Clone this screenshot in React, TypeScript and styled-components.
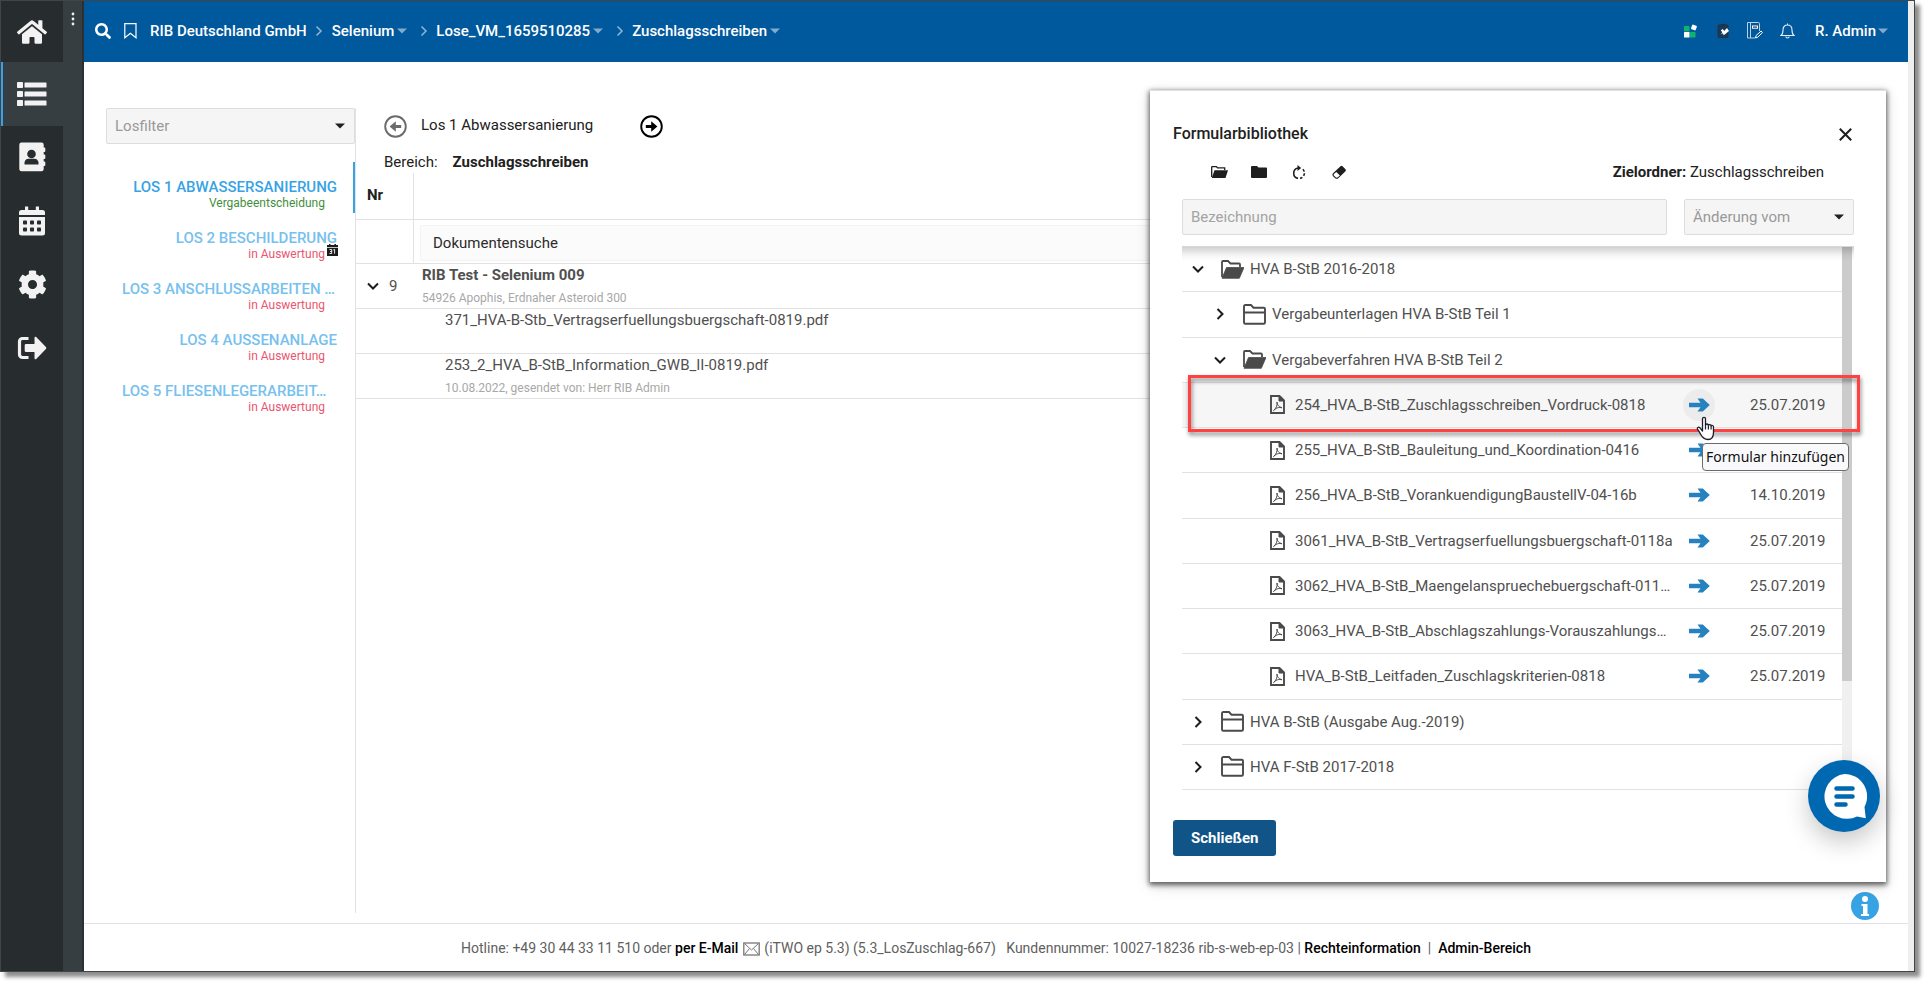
import React from "react";
import styled, { createGlobalStyle, css } from "styled-components";
import { FaSearch, FaHome, FaCog } from "react-icons/fa";

const GlobalStyle = createGlobalStyle`
  *, *::before, *::after { box-sizing: border-box; }
  body {
    margin: 0;
    background: #fff;
    color: #212121;
    font-family: Roboto, "Liberation Sans", sans-serif;
    font-size: 15px;
    line-height: 20px;
  }
  button, input, select { font: inherit; color: inherit; }
  button { border: 0; padding: 0; background: none; cursor: pointer; }
  a { color: inherit; text-decoration: none; }
  svg { display: block; flex: none; }
`;

/* ---------- page frame ---------- */

const Page = styled.div`
  min-height: 100vh;
  padding: 0 15px 15px 0;
  display: flex;
`;

const Frame = styled.div`
  position: relative;
  flex: 1;
  min-width: 0;
  display: flex;
  border: 1px solid #444;
  background: #fff;
  box-shadow: 5px 5px 4px rgba(0, 0, 0, 0.45);
`;

const PageScroll = styled.div`
  width: 6px;
  background: #eee;
`;

/* ---------- side navigation ---------- */

const SideNav = styled.nav`
  width: 62px;
  background: #272c2e;
`;

const NavHome = styled.a`
  height: 61px;
  display: flex;
  align-items: center;
  justify-content: center;
  color: #f2f2f2;
`;

const NavList = styled.div`
  height: 318px;
  display: flex;
  flex-direction: column;
`;

const NavItem = styled.a<{ $active?: boolean }>`
  flex: 1;
  display: flex;
  align-items: center;
  justify-content: center;
  color: #f2f2f2;
  ${(p) => p.$active && css`
    background: #363e42;
    box-shadow: inset 2px 0 #38a3e4;
  `}
`;

const NavStrip = styled.div`
  width: 21px;
  padding-top: 11px;
  background: #363e42;
  border-right: 2px solid #2b3033;
  display: flex;
  align-items: flex-start;
  justify-content: center;
`;

/* ---------- header ---------- */

const Column = styled.div`
  flex: 1;
  min-width: 0;
  display: flex;
  flex-direction: column;
`;

const Header = styled.header`
  height: 61px;
  padding: 0 20px 2px 11px;
  background: #00589d;
  color: #fff;
  font-weight: 500;
  display: flex;
  align-items: center;
  justify-content: space-between;
`;

const Crumbs = styled.div`
  display: flex;
  align-items: center;
`;

const HeaderButton = styled.button`
  margin-right: 13px;
`;

const Crumb = styled.a<{ $menu?: boolean }>`
  display: flex;
  align-items: center;
  gap: 3px;
  margin-right: ${(p) => (p.$menu ? 4 : 0)}px;
`;

const CrumbSep = styled.span`
  width: 25px;
  display: flex;
  justify-content: center;
`;

const Tools = styled.div`
  display: flex;
  align-items: center;
  gap: 16px;
`;

const ToolButton = styled.button`
  width: 16px;
  height: 18px;
  display: flex;
  align-items: center;
  justify-content: center;
`;

const UserButton = styled.button`
  margin-left: 4px;
  display: flex;
  align-items: center;
  gap: 2px;
  font-weight: 500;
`;

/* ---------- form controls ---------- */

const SelectBox = styled.label<{ $width?: number }>`
  position: relative;
  display: block;
  width: ${(p) => (p.$width ? `${p.$width}px` : "100%")};
  svg { position: absolute; right: 10px; top: 15px; pointer-events: none; }
`;

const Select = styled.select`
  appearance: none;
  width: 100%;
  height: 36px;
  padding: 0 30px 0 8px;
  border: 1px solid #ddd;
  border-radius: 2px;
  background: #f5f5f5;
  color: #999;
`;

const TextInput = styled.input`
  flex: 1;
  min-width: 0;
  height: 36px;
  padding: 0 8px;
  border: 1px solid #ddd;
  border-radius: 2px;
  background: #f5f5f5;
  &::placeholder { color: #a3a3a3; opacity: 1; }
`;

/* ---------- lot panel ---------- */

const Body = styled.div`
  flex: 1;
  min-height: 0;
  padding: 46px 40px 10px 22px;
  display: flex;
`;

const LotPanel = styled.aside`
  width: 250px;
  border-right: 1px solid #e2e2e2;
`;

const Lots = styled.ul`
  list-style: none;
  margin: 18px 0 0;
  padding: 0;
`;

const Lot = styled.li<{ $active?: boolean }>`
  position: relative;
  height: 51px;
  padding: 17px 16px 0 16px;
  line-height: 16px;
  text-align: right;
  border-right: 2px solid ${(p) => (p.$active ? "#38a3e4" : "transparent")};
  > svg { position: absolute; right: 15px; top: 31px; }
`;

const LotTitle = styled.a<{ $active?: boolean; $short?: boolean }>`
  display: block;
  white-space: nowrap;
  text-align: ${(p) => (p.$short ? "left" : "right")};
  font-weight: 500;
  color: ${(p) => (p.$active ? "#38a3e4" : "#77c1ee")};
`;

const LotState = styled.div<{ $done?: boolean }>`
  padding-right: 12px;
  font-size: 12px;
  color: ${(p) => (p.$done ? "#3f8f3a" : "#ea5670")};
`;

/* ---------- documents ---------- */

const Main = styled.main`
  flex: 1;
  min-width: 0;
`;

const LotPager = styled.div`
  height: 36px;
  padding-left: 28px;
  display: flex;
  align-items: center;
`;

const LotName = styled.span`
  width: 233px;
  padding: 0 0 2px 14px;
`;

const Area = styled.div`
  margin: 8px 0 1px;
  padding-left: 28px;
  display: flex;
  gap: 15px;
`;

const DocTable = styled.table`
  width: 100%;
  border-collapse: separate;
  border-spacing: 0;
  table-layout: fixed;
`;

const NrCol = styled.col`
  width: 58px;
`;

const HeadCell = styled.th<{ $ruled?: boolean }>`
  height: 47px;
  padding: 0 0 2px 11px;
  text-align: left;
  font-weight: 700;
  border-bottom: 1px solid #e2e2e2;
  ${(p) => p.$ruled && css`border-right: 1px solid #e2e2e2;`}
`;

const SearchCell = styled.td<{ $ruled?: boolean }>`
  height: 44px;
  padding: 3px 0 0 6px;
  border-bottom: 1px solid #e2e2e2;
  ${(p) => p.$ruled && css`border-right: 1px solid #e2e2e2;`}
`;

const SearchInput = styled.input`
  display: block;
  width: 100%;
  height: 36px;
  padding: 0 12px;
  border: 1px solid #f3f3f3;
  border-radius: 2px;
  background: #fbfbfb;
  &::placeholder { color: #2b2b2b; opacity: 1; }
`;

const DocCell = styled.td<{ $indent?: number }>`
  height: 45px;
  padding: 1px 0 0 ${(p) => p.$indent ?? 8}px;
  vertical-align: top;
  color: #505050;
  border-bottom: 1px solid #e2e2e2;
`;

const NrToggle = styled.button`
  height: 42px;
  padding-left: 3px;
  display: flex;
  align-items: center;
  gap: 10px;
`;

const Note = styled.div`
  padding-top: 3px;
  font-size: 12px;
  color: #a8a8a8;
`;

/* ---------- footer ---------- */

const Footer = styled.footer`
  height: 48px;
  padding-top: 14px;
  border-top: 1px solid #e2e2e2;
  color: #606060;
  font-size: 14px;
  text-align: center;
  white-space: pre;
  svg { display: inline-block; margin: 0 1px; vertical-align: -3px; }
  a { color: #000; font-weight: 500; }
`;

const InfoButton = styled.button`
  position: absolute;
  right: 35px;
  bottom: 51px;
  width: 28px;
  height: 28px;
`;

/* ---------- form library dialog ---------- */

const Dialog = styled.section`
  position: absolute;
  top: 89px;
  right: 28px;
  width: 736px;
  padding: 33px 32px 26px 23px;
  background: #fff;
  border-top: 1px solid #e0e0e0;
  box-shadow: 0 2px 5px 1px rgba(0, 0, 0, 0.6), 0 4px 14px rgba(0, 0, 0, 0.15);
`;

const DialogHead = styled.div`
  display: flex;
  align-items: center;
  justify-content: space-between;
`;

const DialogTitle = styled.h2`
  margin: 0;
  font-size: 16px;
  line-height: 20px;
  font-weight: 500;
`;

const CloseButton = styled.button`
  width: 18px;
  height: 18px;
  display: flex;
  align-items: center;
  justify-content: center;
`;

const DialogTools = styled.div`
  margin-top: 18px;
  padding: 0 30px 0 26px;
  display: flex;
  align-items: center;
`;

const IconButton = styled.button`
  width: 40px;
  height: 20px;
  display: flex;
  align-items: center;
  justify-content: center;
`;

const Target = styled.span`
  margin-left: auto;
`;

const Filters = styled.div`
  margin: 17px 0 0 9px;
  display: flex;
  gap: 17px;
`;

const TreeArea = styled.div`
  position: relative;
  margin: 11px 0 0 9px;
  padding-right: 2px;
  display: flex;
  border-top: 1px solid #d8d8d8;
  &::before {
    content: "";
    position: absolute;
    inset: 0 0 auto 0;
    height: 14px;
    background: linear-gradient(rgba(0, 0, 0, 0.18), rgba(0, 0, 0, 0.04) 60%, rgba(0, 0, 0, 0));
    pointer-events: none;
  }
`;

const TreeView = styled.div`
  flex: 1;
  min-width: 0;
`;

const Tree = styled.table`
  width: 100%;
  height: 543px;
  border-collapse: separate;
  border-spacing: 0;
  table-layout: fixed;
  color: #505050;
`;

const TreeCol = styled.col<{ $width?: number }>`
  width: ${(p) => (p.$width ? `${p.$width}px` : "auto")};
`;

const TreeRow = styled.tr<{ $hover?: boolean }>`
  height: 45px;
  background: ${(p) => (p.$hover ? "#f6f6f6" : "transparent")};
`;

const TreeCell = styled.td`
  padding: 0;
  border-bottom: 1px solid #e2e2e2;
`;

const DateCell = styled(TreeCell)`
  padding-left: 26px;
`;

const Node = styled.div<{ $level: number }>`
  display: flex;
  align-items: center;
  padding-left: ${(p) => [9, 31, 88][p.$level]}px;
`;

const Toggle = styled.button`
  flex: none;
  width: 14px;
  height: 20px;
  margin-right: 16px;
  display: flex;
  align-items: center;
  justify-content: center;
`;

const NodeLabel = styled.span<{ $gap: number }>`
  min-width: 0;
  margin-left: ${(p) => p.$gap}px;
  overflow: hidden;
  white-space: nowrap;
  text-overflow: ellipsis;
`;

const AddButton = styled.button<{ $hover?: boolean }>`
  width: 32px;
  height: 32px;
  margin: 0 auto;
  border-radius: 50%;
  display: flex;
  align-items: center;
  justify-content: center;
  background: ${(p) => (p.$hover ? "#ececec" : "transparent")};
`;

const ScrollTrack = styled.div`
  width: 10px;
  background: #f0f0f0;
`;

const ScrollThumb = styled.div`
  height: 80%;
  background: #cbcbcb;
`;

const Highlight = styled.div`
  position: absolute;
  left: 6px;
  right: -6px;
  top: 128px;
  height: 57px;
  border: 3px solid #ff4141;
  filter: drop-shadow(1px 3px 2px rgba(0, 0, 0, 0.5));
  pointer-events: none;
`;

const Pointer = styled.svg`
  position: absolute;
  right: 139px;
  top: 169px;
`;

const Tooltip = styled.div`
  position: absolute;
  right: 5px;
  top: 196px;
  padding: 3px;
  border: 1px solid #6b6b6b;
  border-radius: 4px;
  background: #f9f9fb;
  color: #111;
  font-family: "Noto Sans", "Open Sans", sans-serif;
  font-size: 14px;
  line-height: 20px;
  white-space: nowrap;
`;

const PrimaryButton = styled.button`
  height: 36px;
  margin-top: 30px;
  padding: 0 18px;
  border-radius: 3px;
  background: #115488;
  color: #fff;
  font-weight: 700;
`;

const ChatButton = styled.button`
  position: absolute;
  right: 6px;
  bottom: 50px;
  width: 72px;
  height: 72px;
  border-radius: 50%;
  background: #0067b1;
  box-shadow: 0 10px 24px rgba(0, 0, 0, 0.22);
`;

/* ---------- drawings ---------- */

const Caret = ({ color = "#212121" }: { color?: string }) => (
  <svg width="10" height="6" viewBox="0 0 10 6"><path d="M0 0.5h10L5 5.5z" fill={color} /></svg>
);

const Separator = () => (
  <svg width="8" height="12" viewBox="0 0 8 12" fill="none" stroke="#8fb6d6" strokeWidth="1.5"><path d="M1.500 1.500L6 6l-4.500 4.500" /></svg>
);

const BookmarkIcon = () => (
  <svg width="13" height="16" viewBox="0 0 13 16" fill="none" stroke="#fff" strokeWidth="1.200"><path d="M.8.6h11.200v14.200L6.400 10.200.8 14.800z" /></svg>
);

const DotsIcon = () => (
  <svg width="4" height="14" viewBox="0 0 4 14" fill="#f0f0f0"><circle cx="2" cy="2" r="1.400" /><circle cx="2" cy="7" r="1.400" /><circle cx="2" cy="12" r="1.400" /></svg>
);

const ListIcon = () => (
  <svg width="30" height="26" viewBox="0 0 30 26" fill="currentColor">
    {[1, 10, 19].map((y) => <g key={y}><rect x="0" y={y} width="6" height="6" rx=".8" /><rect x="7.500" y={y + 0.5} width="22" height="5" rx=".6" /></g>)}
  </svg>
);

const ContactsIcon = () => (
  <svg width="28" height="30" viewBox="0 0 28 30">
    <path d="M3.500 0.500h20a2.200 2.200 0 0 1 2.200 2.200V5.500h.8a.8.8 0 0 1 .8.8v3a.8.8 0 0 1-.8.8h-.8v2.400h.8a.8.8 0 0 1 .8.8v3a.8.8 0 0 1-.8.8h-.8v2.400h.8a.8.8 0 0 1 .8.8v3a.8.8 0 0 1-.8.8h-.8v3a2.200 2.200 0 0 1-2.200 2.200h-20a2.200 2.200 0 0 1-2.200-2.200V2.700A2.200 2.200 0 0 1 3.500.5z" fill="#f2f2f2" />
    <circle cx="13.500" cy="12" r="4.300" fill="#272c2e" />
    <path d="M6.500 22.500v-1.700c0-2.300 1.700-4 4-4h6c2.300 0 4 1.700 4 4v1.700z" fill="#272c2e" />
  </svg>
);

const CalendarIcon = () => (
  <svg width="28" height="30" viewBox="0 0 28 30">
    <path d="M7 .5h3.200V4h7.600V.5H21V4h3.500A2.500 2.500 0 0 1 27 6.500V9H1V6.500A2.500 2.500 0 0 1 3.500 4H7z" fill="#f2f2f2" />
    <path d="M1 11h26v16a2.500 2.500 0 0 1-2.500 2.500h-21A2.500 2.500 0 0 1 1 27z" fill="#f2f2f2" />
    {[14.5, 21.5].map((y) => [5, 12, 19].map((x) => <rect key={`${x}-${y}`} x={x} y={y} width="4" height="4" rx=".8" fill="#272c2e" />))}
  </svg>
);

const ExitIcon = () => (
  <svg width="30" height="24" viewBox="0 0 30 24">
    <path d="M11.500 2.500H5.500a3 3 0 0 0-3 3v13a3 3 0 0 0 3 3h6" fill="none" stroke="#f2f2f2" strokeWidth="3.200" />
    <path d="M9 8h8.500V1.800a1 1 0 0 1 1.700-.8l9.700 10a1.400 1.400 0 0 1 0 2l-9.700 10a1 1 0 0 1-1.700-.8V16H9a1.300 1.300 0 0 1-1.300-1.300V9.300A1.300 1.300 0 0 1 9 8z" fill="#f2f2f2" />
  </svg>
);

const AppsIcon = () => (
  <svg width="14" height="14" viewBox="0 0 14 14">
    <rect x="0" y="2" width="5.500" height="5.500" rx=".6" fill="#0fb36b" />
    <rect x="0" y="8" width="5.500" height="5.500" rx=".6" fill="#fff" />
    <rect x="6" y="8" width="5.500" height="5.500" rx=".6" fill="#0fb36b" />
    <rect x="7.500" y="1" width="5" height="5" rx="1" fill="#fff" transform="rotate(20 10 3.400)" />
  </svg>
);

const ClipboardIcon = () => (
  <svg width="13" height="15" viewBox="0 0 13 15">
    <rect x="1" y="2" width="10" height="12.500" rx="1" fill="#163a5c" stroke="#24323e" />
    <path d="M3.500 2.500C3.500 0 8.500 0 8.500 2.500z" fill="#24323e" />
    <path d="M3.800 7.200l2-1.200 1.400 2 2.800-3L12 8l-5.200 4.300-1-2L4 11.500l1.200-2.300z" fill="#fff" />
  </svg>
);

const NotebookIcon = () => (
  <svg width="16" height="17" viewBox="0 0 16 17" fill="none" stroke="#b8d2e6" strokeWidth="1">
    <path d="M12.500 9V1.500A1 1 0 0 0 11.500.5H.5v15.500H8M3.500.5V16" />
    <rect x="5.500" y="4" width="5" height="2.200" stroke="#fff" fill="#16324c" />
    <path d="M8.500 16l.6-2.500 5-4.500 1.300 1.500-4.600 4.700z" stroke="#fff" />
  </svg>
);

const BellIcon = () => (
  <svg width="15" height="16" viewBox="0 0 15 16" fill="none" stroke="#e6eff6" strokeWidth="1.100">
    <path d="M1 12.500c1.800-1.300 2-3 2-5.500C3 3.800 4.800 2 7.500 2S12 3.800 12 7c0 2.500.2 4.200 2 5.500zM7.500 2V.4M5.800 13.500c.2 2 3.200 2 3.400 0" />
  </svg>
);

const Day31Icon = () => (
  <svg width="11" height="12" viewBox="0 0 11 12">
    <path d="M2 0h1.500v1h4V0H9v1h2v2H0V1h2zM0 3.700h11V12H0z" fill="#1c1c1c" />
    <path d="M2.500 5.500h2.200v4H2.500M3 7.500h1.700M6.300 6l1.300-.6v4.300" fill="none" stroke="#fff" strokeWidth=".9" />
  </svg>
);

const CircleArrow = ({ color, flip }: { color: string; flip?: boolean }) => (
  <svg width="23" height="23" viewBox="0 0 23 23">
    <g transform={flip ? "matrix(-1 0 0 1 23 0)" : undefined}>
      <circle cx="11.500" cy="11.500" r="10.300" fill="none" stroke={color} strokeWidth="1.900" />
      <path d="M5.800 10h5.400V6.300l6.200 5.200-6.200 5.200V13H5.800z" fill={color} />
    </g>
  </svg>
);

const Chevron = ({ open }: { open?: boolean }) => (
  <svg width="12" height="12" viewBox="0 0 12 12" fill="none" stroke="#1c1c1c" strokeWidth="2">
    <path d={open ? "M1 3.500l5 5 5-5" : "M3.500 1l5 5-5 5"} />
  </svg>
);

const FolderOpenIcon = () => (
  <svg width="23" height="19" viewBox="0 0 23 19">
    <path d="M1 17V2a1 1 0 0 1 1-1h5l2.500 2.500H18a1 1 0 0 1 1 1V7" fill="none" stroke="#4a4a4a" strokeWidth="1.800" />
    <path d="M5.500 7.500H23L18.300 18.300H1z" fill="#4a4a4a" stroke="#4a4a4a" strokeLinejoin="round" strokeWidth=".8" />
  </svg>
);

const FolderIcon = () => (
  <svg width="23" height="21" viewBox="0 0 23 21" fill="none" stroke="#4a4a4a" strokeWidth="1.900">
    <path d="M1 18.500V2.300A1.300 1.300 0 0 1 2.300 1H8l2.500 2.700h10.200A1.300 1.300 0 0 1 22 5v13.500a1.300 1.300 0 0 1-1.300 1.300H2.300A1.300 1.300 0 0 1 1 18.500zM1 8.500h21" />
  </svg>
);

const PdfIcon = () => (
  <svg width="15" height="19" viewBox="0 0 15 19" fill="none" stroke="#4a4a4a">
    <path d="M1 1h8.500L14 5.500V18H1z" strokeWidth="1.900" />
    <path d="M9 1v5h5z" fill="#4a4a4a" />
    <path d="M7 7c.3 2.500.8 4.200 5 5.800-3-.8-5.500-.3-8.500 2.800C6 13.500 7.600 10.500 7 7z" strokeWidth="1" />
  </svg>
);

const AddArrow = () => (
  <svg width="21" height="14" viewBox="0 0 21 14"><path d="M0 4.800h11.500L8.500.5h5.300L20.800 7l-7 6.500H8.500l3-4.300H0z" fill="#2682bf" /></svg>
);

const SmallFolderOpen = () => (
  <svg width="17" height="12" viewBox="0 0 17 12">
    <path d="M.7 11V1.200A.6.6 0 0 1 1.300.6h4l1.200 1.200h7.200v2.200" fill="none" stroke="#1f1f1f" strokeWidth="1.300" />
    <path d="M3.500 4.200H17L14.500 12H.8z" fill="#1f1f1f" />
  </svg>
);

const SmallFolder = () => (
  <svg width="16" height="12" viewBox="0 0 16 12"><path d="M1 0h5l1.500 1.500H15a1 1 0 0 1 1 1V11a1 1 0 0 1-1 1H1a1 1 0 0 1-1-1V1a1 1 0 0 1 1-1z" fill="#1f1f1f" /></svg>
);

const ReloadIcon = () => (
  <svg width="14" height="15" viewBox="0 0 14 15" fill="none" stroke="#1f1f1f" strokeWidth="1.600">
    <path d="M6 13.400A5.300 5.300 0 0 1 6 3" />
    <path d="M8 13.300a5.300 5.300 0 0 0 4.200-6.800M12.200 6.500A5.300 5.300 0 0 0 10.500 4" strokeDasharray="2.600 1.700" />
    <path d="M5.500 0v6l3.700-3z" fill="#1f1f1f" stroke="none" />
  </svg>
);

const EraserIcon = () => (
  <svg width="16" height="15" viewBox="0 0 16 15">
    <path d="M9.500 1.200a1.500 1.500 0 0 1 2 0l3 3a1.500 1.500 0 0 1 0 2L7.500 13a2.500 2.500 0 0 1-3.500 0L2 11.200a2.200 2.200 0 0 1 0-3z" fill="#1f1f1f" />
    <path d="M5.300 7l3.600 3.500L6.700 12.200a1.500 1.500 0 0 1-2 0L2.900 10.500a1.200 1.200 0 0 1 0-1.500z" fill="#fff" />
  </svg>
);

const CloseIcon = () => (
  <svg width="13" height="13" viewBox="0 0 13 13" stroke="#1c1c1c" strokeWidth="2"><path d="M.8.8l11.400 11.400M12.200.8L.8 12.200" /></svg>
);

const MailIcon = () => (
  <svg width="17" height="14" viewBox="0 0 17 14" fill="none" stroke="#777" strokeWidth="1"><rect x=".8" y="1" width="15.400" height="12" strokeWidth="1.300" /><path d="M1.500 1.500L8.500 8l7-6.500M1.500 12.500l5-6M15.500 12.500l-5-6" /></svg>
);

const InfoIcon = () => (
  <svg width="28" height="28" viewBox="0 0 28 28">
    <circle cx="14" cy="14" r="14" fill="#38a3e4" />
    <circle cx="14" cy="7" r="3" fill="#fff" />
    <path d="M10.500 12h6v10H18v2h-8v-2h2v-8h-1.500z" fill="#fff" />
  </svg>
);

const ChatIcon = () => (
  <svg width="72" height="72" viewBox="0 0 72 72">
    <path d="M36.500 14a22.500 22.500 0 0 1 20 33l1.300 11.200-8.800-1.700A22.500 22.500 0 1 1 36.500 14z" fill="#fff" />
    <path d="M28.500 28.500h16M28.500 36.500h16M28.500 44.500h9" stroke="#0067b1" strokeWidth="4.500" strokeLinecap="round" />
  </svg>
);

/* ---------- data ---------- */

const crumbs = ["Selenium", "Lose_VM_1659510285", "Zuschlagsschreiben"];

const lots = [
  { title: "LOS 1 ABWASSERSANIERUNG", state: "Vergabeentscheidung", active: true },
  { title: "LOS 2 BESCHILDERUNG", state: "in Auswertung", dated: true },
  { title: "LOS 3 ANSCHLUSSARBEITEN …", state: "in Auswertung", short: true },
  { title: "LOS 4 AUSSENANLAGE", state: "in Auswertung" },
  { title: "LOS 5 FLIESENLEGERARBEIT…", state: "in Auswertung", short: true },
];

type TreeNode = { label: string; level: number; open?: boolean; date?: string; hover?: boolean };

const nodes: TreeNode[] = [
  { label: "HVA B-StB 2016-2018", level: 0, open: true },
  { label: "Vergabeunterlagen HVA B-StB Teil 1", level: 1 },
  { label: "Vergabeverfahren HVA B-StB Teil 2", level: 1, open: true },
  { label: "254_HVA_B-StB_Zuschlagsschreiben_Vordruck-0818", level: 2, date: "25.07.2019", hover: true },
  { label: "255_HVA_B-StB_Bauleitung_und_Koordination-0416", level: 2 },
  { label: "256_HVA_B-StB_VorankuendigungBaustellV-04-16b", level: 2, date: "14.10.2019" },
  { label: "3061_HVA_B-StB_Vertragserfuellungsbuergschaft-0118a", level: 2, date: "25.07.2019" },
  { label: "3062_HVA_B-StB_Maengelanspruechebuergschaft-011…", level: 2, date: "25.07.2019" },
  { label: "3063_HVA_B-StB_Abschlagszahlungs-Vorauszahlungs…", level: 2, date: "25.07.2019" },
  { label: "HVA_B-StB_Leitfaden_Zuschlagskriterien-0818", level: 2, date: "25.07.2019" },
  { label: "HVA B-StB (Ausgabe Aug.-2019)", level: 0 },
  { label: "HVA F-StB 2017-2018", level: 0 },
];

export default function App() {
  return (
    <Page>
      <GlobalStyle />
      <Frame>
        <SideNav>
          <NavHome href="#" aria-label="Start"><FaHome size={30} /></NavHome>
          <NavList>
            <NavItem href="#" $active aria-label="Vergaben"><ListIcon /></NavItem>
            <NavItem href="#" aria-label="Kontakte"><ContactsIcon /></NavItem>
            <NavItem href="#" aria-label="Kalender"><CalendarIcon /></NavItem>
            <NavItem href="#" aria-label="Einstellungen"><FaCog size={29} /></NavItem>
            <NavItem href="#" aria-label="Abmelden"><ExitIcon /></NavItem>
          </NavList>
        </SideNav>
        <NavStrip><DotsIcon /></NavStrip>

        <Column>
          <Header>
            <Crumbs>
              <HeaderButton aria-label="Suche"><FaSearch size={16} /></HeaderButton>
              <HeaderButton aria-label="Lesezeichen"><BookmarkIcon /></HeaderButton>
              <Crumb href="#">RIB Deutschland GmbH</Crumb>
              {crumbs.map((name) => (
                <React.Fragment key={name}>
                  <CrumbSep><Separator /></CrumbSep>
                  <Crumb href="#" $menu>{name}<Caret color="#7fabce" /></Crumb>
                </React.Fragment>
              ))}
            </Crumbs>
            <Tools>
              <ToolButton aria-label="Apps"><AppsIcon /></ToolButton>
              <ToolButton aria-label="Aufgaben"><ClipboardIcon /></ToolButton>
              <ToolButton aria-label="Notizen"><NotebookIcon /></ToolButton>
              <ToolButton aria-label="Benachrichtigungen"><BellIcon /></ToolButton>
              <UserButton>R. Admin<Caret color="#7fabce" /></UserButton>
            </Tools>
          </Header>

          <Body>
            <LotPanel>
              <SelectBox>
                <Select aria-label="Losfilter"><option>Losfilter</option></Select>
                <Caret />
              </SelectBox>
              <Lots>
                {lots.map((lot) => (
                  <Lot key={lot.title} $active={lot.active}>
                    <LotTitle href="#" $active={lot.active} $short={lot.short}>{lot.title}</LotTitle>
                    <LotState $done={lot.active}>{lot.state}</LotState>
                    {lot.dated && <Day31Icon />}
                  </Lot>
                ))}
              </Lots>
            </LotPanel>

            <Main>
              <LotPager>
                <button aria-label="Voriges Los"><CircleArrow color="#6b6b6b" flip /></button>
                <LotName>Los 1 Abwassersanierung</LotName>
                <button aria-label="Nächstes Los"><CircleArrow color="#000" /></button>
              </LotPager>
              <Area><span>Bereich:</span><b>Zuschlagsschreiben</b></Area>
              <DocTable>
                <colgroup><NrCol /><col /></colgroup>
                <thead>
                  <tr><HeadCell $ruled>Nr</HeadCell><HeadCell /></tr>
                </thead>
                <tbody>
                  <tr>
                    <SearchCell $ruled />
                    <SearchCell><SearchInput aria-label="Dokumentensuche" placeholder="Dokumentensuche" /></SearchCell>
                  </tr>
                  <tr>
                    <DocCell><NrToggle><Chevron open />9</NrToggle></DocCell>
                    <DocCell><b>RIB Test - Selenium 009</b><Note>54926 Apophis, Erdnaher Asteroid 300</Note></DocCell>
                  </tr>
                  <tr>
                    <DocCell />
                    <DocCell $indent={31}>371_HVA-B-Stb_Vertragserfuellungsbuergschaft-0819.pdf</DocCell>
                  </tr>
                  <tr>
                    <DocCell />
                    <DocCell $indent={31}>
                      253_2_HVA_B-StB_Information_GWB_II-0819.pdf
                      <Note>10.08.2022, gesendet von: Herr RIB Admin</Note>
                    </DocCell>
                  </tr>
                </tbody>
              </DocTable>
            </Main>
          </Body>

          <Footer>
            Hotline: +49 30 44 33 11 510 oder <a href="#">per E-Mail</a> <MailIcon /> (iTWO ep 5.3) (5.3_LosZuschlag-667){"   "}Kundennummer: 10027-18236 rib-s-web-ep-03 | <a href="#">Rechteinformation</a>{"  |  "}<a href="#">Admin-Bereich</a>
          </Footer>
        </Column>
        <PageScroll />

        <InfoButton aria-label="Information"><InfoIcon /></InfoButton>

        <Dialog role="dialog" aria-labelledby="library-title">
          <DialogHead>
            <DialogTitle id="library-title">Formularbibliothek</DialogTitle>
            <CloseButton aria-label="Dialog schließen"><CloseIcon /></CloseButton>
          </DialogHead>
          <DialogTools>
            <IconButton aria-label="Alle öffnen"><SmallFolderOpen /></IconButton>
            <IconButton aria-label="Alle schließen"><SmallFolder /></IconButton>
            <IconButton aria-label="Neu laden"><ReloadIcon /></IconButton>
            <IconButton aria-label="Filter löschen"><EraserIcon /></IconButton>
            <Target><b>Zielordner:</b> Zuschlagsschreiben</Target>
          </DialogTools>
          <Filters>
            <TextInput aria-label="Bezeichnung" placeholder="Bezeichnung" />
            <SelectBox $width={170}>
              <Select aria-label="Änderung vom"><option>Änderung vom</option></Select>
              <Caret />
            </SelectBox>
          </Filters>
          <TreeArea>
            <TreeView>
              <Tree>
                <colgroup><TreeCol /><TreeCol $width={50} /><TreeCol $width={118} /></colgroup>
                <tbody>
                  {nodes.map((n) => (
                    <TreeRow key={n.label} $hover={n.hover}>
                      <TreeCell>
                        <Node $level={n.level}>
                          {n.level < 2 && (
                            <Toggle aria-label={n.open ? "Zuklappen" : "Aufklappen"}><Chevron open={n.open} /></Toggle>
                          )}
                          {n.level === 2 ? <PdfIcon /> : n.open ? <FolderOpenIcon /> : <FolderIcon />}
                          <NodeLabel $gap={n.level === 2 ? 10 : 6}>{n.label}</NodeLabel>
                        </Node>
                      </TreeCell>
                      <TreeCell>
                        {n.level === 2 && <AddButton $hover={n.hover} aria-label="Formular hinzufügen"><AddArrow /></AddButton>}
                      </TreeCell>
                      <DateCell>{n.date}</DateCell>
                    </TreeRow>
                  ))}
                </tbody>
              </Tree>
            </TreeView>
            <ScrollTrack><ScrollThumb /></ScrollTrack>
            <Highlight />
            <Tooltip role="tooltip">Formular hinzufügen</Tooltip>
            <Pointer width="19" height="25" viewBox="0 0 19 25">
              <path d="M6.500 15V2.800c0-2 3-2 3 0V9c.3-1.500 2.700-1.300 2.900.3.500-1.200 2.500-.8 2.700.6.600-.9 2.400-.5 2.400 1v5.600c0 4.500-1.700 7-5.500 7-4.200 0-5.700-2-7.500-5.500-1-1.800-2-3.500-3-4.800-.8-1.600 1-2.600 2.300-1.500z" fill="#fff" stroke="#1c1c2a" strokeWidth="1.300" strokeLinejoin="round" />
              <path d="M9.500 8.500v5M12.400 9.500v4M15.100 10v3.500" stroke="#1c1c2a" strokeWidth="1.200" />
            </Pointer>
          </TreeArea>
          <PrimaryButton>Schließen</PrimaryButton>
          <ChatButton aria-label="Chat öffnen"><ChatIcon /></ChatButton>
        </Dialog>
      </Frame>
    </Page>
  );
}
